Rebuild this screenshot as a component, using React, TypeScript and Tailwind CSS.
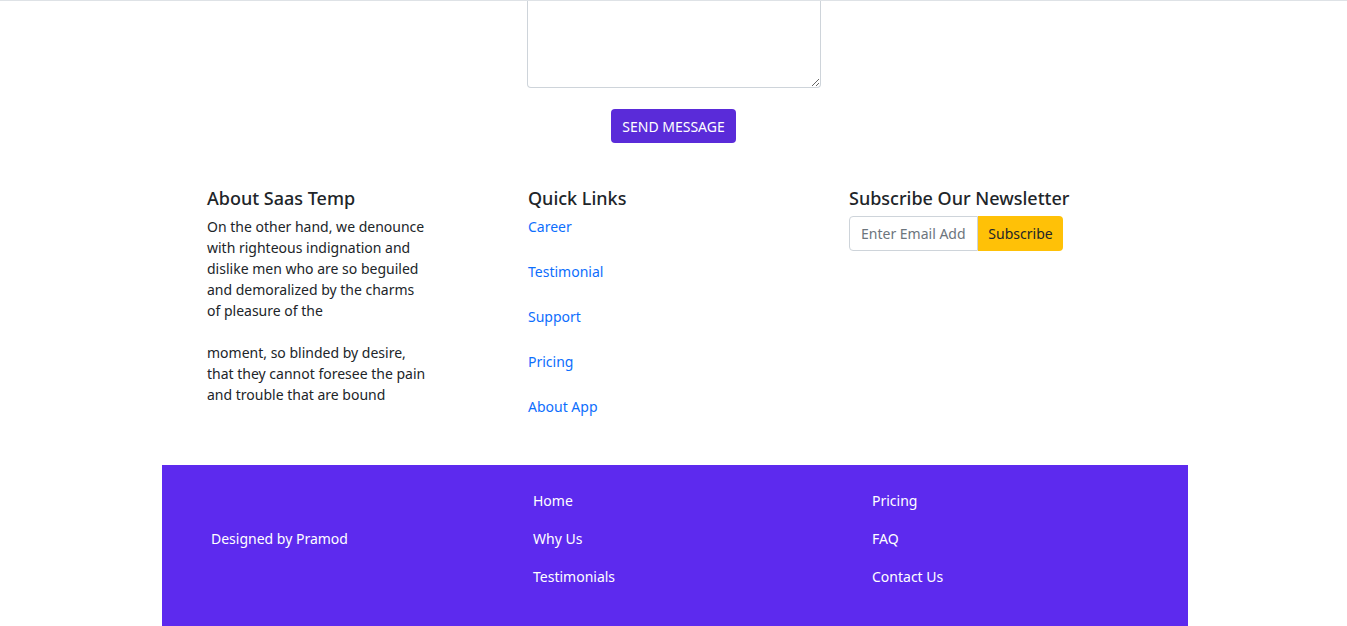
import React from "react";

const quickLinks = ["Career", "Testimonial", "Support", "Pricing", "About App"];
const footerMid = ["Home", "Why Us", "Testimonials"];
const footerRight = ["Pricing", "FAQ", "Contact Us"];

const App = () => {
  return (
    <div
      className="min-h-[626px] bg-white text-[#212529] text-[14px] leading-[21px]"
      style={{ fontFamily: '"Noto Sans", "Open Sans", sans-serif' }}
    >
      <div className="border-t border-[#dee2e6]">
        {/* contact form bottom */}
        <div className="ml-[527px] w-[294px]">
          <textarea className="block w-full h-[87px] border border-t-0 border-[#ced4da] rounded-b-[4px] outline-none" />
        </div>
        <div className="flex justify-center mt-[21px]">
          <button className="bg-[#5a2bd9] text-white text-[14px] uppercase rounded-[4px] h-[34px] w-[125px]">
            Send Message
          </button>
        </div>

        {/* footer columns */}
        <div className="flex pl-[207px] mt-[44px]">
          <div className="w-[321px]">
            <h5 className="text-[18px] leading-[23px] font-medium mb-[6px]">About Saas Temp</h5>
            <p className="w-[220px] mb-[21px]">
              On the other hand, we denounce with righteous indignation and dislike men who are so beguiled and
              demoralized by the charms of pleasure of the
            </p>
            <p className="w-[220px]">moment, so blinded by desire, that they cannot foresee the pain and trouble that are bound</p>
          </div>
          <div className="w-[321px]">
            <h5 className="text-[18px] leading-[23px] font-medium mb-[6px]">Quick Links</h5>
            <ul className="flex flex-col gap-[24px]">
              {quickLinks.map((l) => (
                <li key={l}>
                  <a href="#" className="text-[#0d6efd]">
                    {l}
                  </a>
                </li>
              ))}
            </ul>
          </div>
          <div className="w-[321px]">
            <h5 className="text-[18px] leading-[23px] font-medium mb-[6px]">Subscribe Our Newsletter</h5>
            <div className="flex">
              <input
                placeholder="Enter Email Address"
                className="w-[129px] h-[35px] border border-[#ced4da] rounded-l-[4px] px-[11px] text-[14px] placeholder-[#6c757d] outline-none"
              />
              <button className="h-[35px] w-[85px] bg-[#ffc107] rounded-r-[4px] text-[14px] text-[#212529]">
                Subscribe
              </button>
            </div>
          </div>
        </div>

        {/* bottom band */}
        <div className="ml-[162px] w-[1026px] bg-[#5d2aee] text-white mt-[48px] flex pt-[25px] pb-[40px]">
          <div className="w-[371px] pl-[49px] flex items-center">Designed by Pramod</div>
          <div className="w-[339px] flex flex-col gap-[17px]">
            {footerMid.map((l) => (
              <a key={l} href="#">
                {l}
              </a>
            ))}
          </div>
          <div className="flex flex-col gap-[17px]">
            {footerRight.map((l) => (
              <a key={l} href="#">
                {l}
              </a>
            ))}
          </div>
        </div>
      </div>
    </div>
  );
};

export default App;
